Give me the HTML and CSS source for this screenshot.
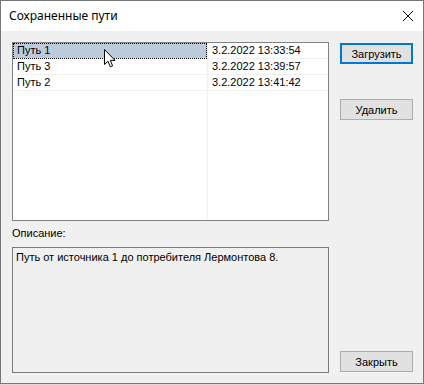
FILE: index.html
```html
<!DOCTYPE html>
<html>
<head>
<meta charset="utf-8">
<link rel="stylesheet" href="styles.css">
</head>
<body>
<div class="window">
  <div class="titlebar">
    <span class="title">Сохраненные пути</span>
    <svg class="close" width="12" height="12" viewBox="0 0 12 12"><path d="M1 1L11 11M11 1L1 11" stroke="#000" stroke-width="1" fill="none"/></svg>
  </div>
  <div class="client">
    <div class="left">
      <div class="list">
        <div class="col col-name">
          <div class="cell selected"><span>Путь 1</span></div>
          <div class="cell">Путь 3</div>
          <div class="cell">Путь 2</div>
        </div>
        <div class="col col-date">
          <div class="cell">3.2.2022 13:33:54</div>
          <div class="cell">3.2.2022 13:39:57</div>
          <div class="cell">3.2.2022 13:41:42</div>
        </div>
      </div>
      <div class="label">Описание:</div>
      <div class="desc">Путь от источника 1 до потребителя Лермонтова 8.</div>
    </div>
    <div class="buttons">
      <div class="btn focused">Загрузить</div>
      <div class="btn delete">Удалить</div>
      <div class="btn close-btn">Закрыть</div>
    </div>
  </div>
  <svg class="cursor" width="13" height="20" viewBox="0 0 13 20"><path d="M0.5 0.5L0.5 15.5L4 12.2L6.3 17.8L8.6 16.8L6.3 11.4L11 11.4Z" fill="#fff" stroke="#000" stroke-width="1" stroke-linejoin="miter"/></svg>
</div>
</body>
</html>
```
FILE: styles.css
```css
html, body {
  margin: 0;
  padding: 0;
  background: #dcdcdc;
}
.window {
  position: relative;
  width: 424px;
  height: 384px;
  box-sizing: border-box;
  border: 1px solid #777;
  background: #f0f0f0;
  display: flex;
  flex-direction: column;
  font-family: "Liberation Sans", Arial, sans-serif;
  font-size: 11px;
  color: #000;
}
.titlebar {
  height: 30px;
  background: #fff;
  display: flex;
  align-items: center;
  justify-content: space-between;
  padding: 0 9px 0 8px;
}
.title {
  font-family: "Noto Sans", "Open Sans", sans-serif;
  font-size: 12px;
  color: #000;
  position: relative;
  top: -1px;
}
.close {
  display: block;
  margin-top: -1px;
}
.client {
  flex: 1;
  display: flex;
  padding: 11px 10px 10px 11px;
  gap: 11px;
}
.left {
  width: 317px;
  display: flex;
  flex-direction: column;
}
.list {
  height: 179px;
  box-sizing: border-box;
  border: 1px solid #828282;
  background: #fff;
  display: flex;
}
.col {
  display: flex;
  flex-direction: column;
}
.col-name {
  width: 194px;
  border-right: 1px solid #f0f0f0;
}
.col-date {
  flex: 1;
}
.cell {
  height: 15px;
  line-height: 15px;
  border-bottom: 1px solid #f0f0f0;
  padding-left: 4px;
  white-space: nowrap;
}
.col-date .cell {
  padding-left: 4px;
}
.cell.selected {
  background: #bccbdc;
  outline: 1px dotted #000;
  outline-offset: -1px;
}
.label {
  margin-top: 6px;
  height: 13px;
  line-height: 13px;
  padding-left: 0;
}
.desc {
  margin-top: 7px;
  height: 126px;
  box-sizing: border-box;
  border: 1px solid #7a7a7a;
  background: #f0f0f0;
  padding: 3px 3px;
  line-height: 13px;
}
.buttons {
  width: 73px;
  display: flex;
  flex-direction: column;
}
.btn {
  height: 21px;
  box-sizing: border-box;
  border: 1px solid #adadad;
  background: #e1e1e1;
  display: flex;
  align-items: center;
  justify-content: center;
}
.btn.focused {
  margin-top: 1px;
  border: 2px solid #0078d7;
}
.btn.delete {
  margin-top: 35px;
}
.btn.close-btn {
  margin-top: auto;
  margin-bottom: 1px;
}
.cursor {
  position: absolute;
  left: 103px;
  top: 48px;
}
```
